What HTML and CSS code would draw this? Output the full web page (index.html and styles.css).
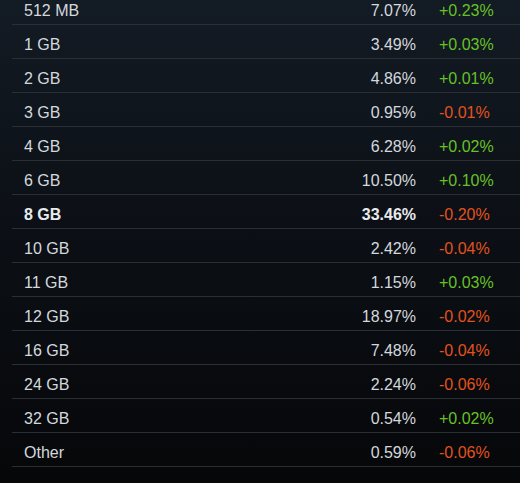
FILE: index.html
```html
<!DOCTYPE html>
<html>
<head>
<meta charset="utf-8">
<link rel="stylesheet" href="styles.css">
</head>
<body>
<div class="table">
  <div class="row"><span class="label">512 MB</span><span class="pct">7.07%</span><span class="chg up">+0.23%</span></div>
  <div class="row"><span class="label">1 GB</span><span class="pct">3.49%</span><span class="chg up">+0.03%</span></div>
  <div class="row"><span class="label">2 GB</span><span class="pct">4.86%</span><span class="chg up">+0.01%</span></div>
  <div class="row"><span class="label">3 GB</span><span class="pct">0.95%</span><span class="chg down">-0.01%</span></div>
  <div class="row"><span class="label">4 GB</span><span class="pct">6.28%</span><span class="chg up">+0.02%</span></div>
  <div class="row"><span class="label">6 GB</span><span class="pct">10.50%</span><span class="chg up">+0.10%</span></div>
  <div class="row strong"><span class="label">8 GB</span><span class="pct">33.46%</span><span class="chg down">-0.20%</span></div>
  <div class="row"><span class="label">10 GB</span><span class="pct">2.42%</span><span class="chg down">-0.04%</span></div>
  <div class="row"><span class="label">11 GB</span><span class="pct">1.15%</span><span class="chg up">+0.03%</span></div>
  <div class="row"><span class="label">12 GB</span><span class="pct">18.97%</span><span class="chg down">-0.02%</span></div>
  <div class="row"><span class="label">16 GB</span><span class="pct">7.48%</span><span class="chg down">-0.04%</span></div>
  <div class="row"><span class="label">24 GB</span><span class="pct">2.24%</span><span class="chg down">-0.06%</span></div>
  <div class="row"><span class="label">32 GB</span><span class="pct">0.54%</span><span class="chg up">+0.02%</span></div>
  <div class="row"><span class="label">Other</span><span class="pct">0.59%</span><span class="chg down">-0.06%</span></div>
</div>
</body>
</html>
```

FILE: styles.css
```css
html, body {
  margin: 0;
  padding: 0;
  height: 100%;
}
body {
  background: linear-gradient(to bottom, #131b24 0%, #0c1016 45%, #060709 100%);
  font-family: Arial, "Liberation Sans", sans-serif;
  font-size: 16px;
  color: #d3d8dd;
  overflow: hidden;
}
.table {
  margin-top: -9px;
  padding-left: 12px;
}
.row {
  display: grid;
  grid-template-columns: 1fr auto 81px;
  column-gap: 23px;
  padding: 11px 0 0 12px;
  box-sizing: content-box;
  line-height: 18px;
  border-bottom: 1px solid #2a2f35;
  height: 22px;
}
.pct {
  text-align: right;
}
.strong .label,
.strong .pct {
  font-weight: bold;
  color: #e8eaec;
}
.up {
  color: #66c126;
}
.down {
  color: #e2521f;
}
```
